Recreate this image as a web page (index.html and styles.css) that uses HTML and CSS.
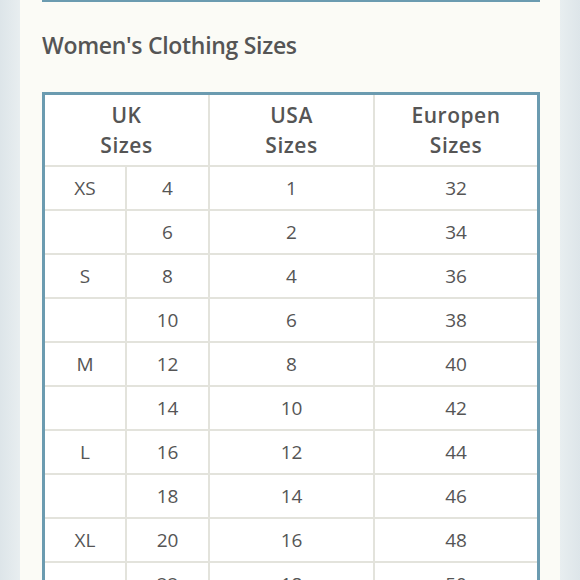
FILE: index.html
```html
<!DOCTYPE html>
<html>
<head>
<meta charset="utf-8">
<link rel="stylesheet" href="styles.css">
</head>
<body>
<div class="panel">
  <div class="topline"></div>
  <h2 class="title">Women's Clothing Sizes</h2>
  <table class="sizes">
    <colgroup>
      <col class="c1"><col class="c2"><col class="c3"><col class="c4">
    </colgroup>
    <thead>
      <tr>
        <th colspan="2">UK<br>Sizes</th>
        <th>USA<br>Sizes</th>
        <th class="last">Europen<br>Sizes</th>
      </tr>
    </thead>
    <tbody>
      <tr><td>XS</td><td>4</td><td>1</td><td class="last">32</td></tr>
      <tr><td></td><td>6</td><td>2</td><td class="last">34</td></tr>
      <tr><td>S</td><td>8</td><td>4</td><td class="last">36</td></tr>
      <tr><td></td><td>10</td><td>6</td><td class="last">38</td></tr>
      <tr><td>M</td><td>12</td><td>8</td><td class="last">40</td></tr>
      <tr><td></td><td>14</td><td>10</td><td class="last">42</td></tr>
      <tr><td>L</td><td>16</td><td>12</td><td class="last">44</td></tr>
      <tr><td></td><td>18</td><td>14</td><td class="last">46</td></tr>
      <tr><td>XL</td><td>20</td><td>16</td><td class="last">48</td></tr>
      <tr><td></td><td>22</td><td>18</td><td class="last">50</td></tr>
    </tbody>
  </table>
</div>
</body>
</html>
```
FILE: styles.css
```css
html, body {
  margin: 0;
  padding: 0;
  height: 100%;
  overflow: hidden;
}
body {
  background: linear-gradient(90deg, #dde5e9 0px, #e8eef0 20px, #e8eef0 560px, #dde5e9 580px);
  font-family: "Open Sans", "Noto Sans", sans-serif;
  color: #555555;
}
.panel {
  margin: 0 20px;
  padding: 0 20px 0 22px;
  min-height: 100%;
  background: #fbfbf6;
}
.topline {
  height: 2px;
  background: #6b9bb0;
}
.title {
  margin: 0;
  padding-top: 27px;
  height: 90px;
  box-sizing: border-box;
  font-size: 23px;
  line-height: 32px;
  font-weight: 600;
  letter-spacing: -0.3px;
  color: #555555;
}
.sizes {
  width: 498px;
  border: 3px solid #6b9bb0;
  border-spacing: 0;
  border-collapse: separate;
  background: #ffffff;
  table-layout: fixed;
}
.c1 { width: 82px; }
.c2 { width: 83px; }
.c3 { width: 165px; }
.c4 { width: 162px; }
.sizes th,
.sizes td {
  padding: 0;
  text-align: center;
  border-right: 2px solid #e3e3dc;
  border-bottom: 2px solid #e3e3dc;
  color: #555555;
}
.sizes th.last,
.sizes td.last {
  border-right: none;
}
.sizes th {
  height: 70px;
  font-size: 21px;
  font-weight: 600;
  line-height: 30px;
  letter-spacing: 0.5px;
}
.sizes td {
  height: 42px;
  font-size: 19px;
  font-weight: 400;
  line-height: 42px;
}
```
